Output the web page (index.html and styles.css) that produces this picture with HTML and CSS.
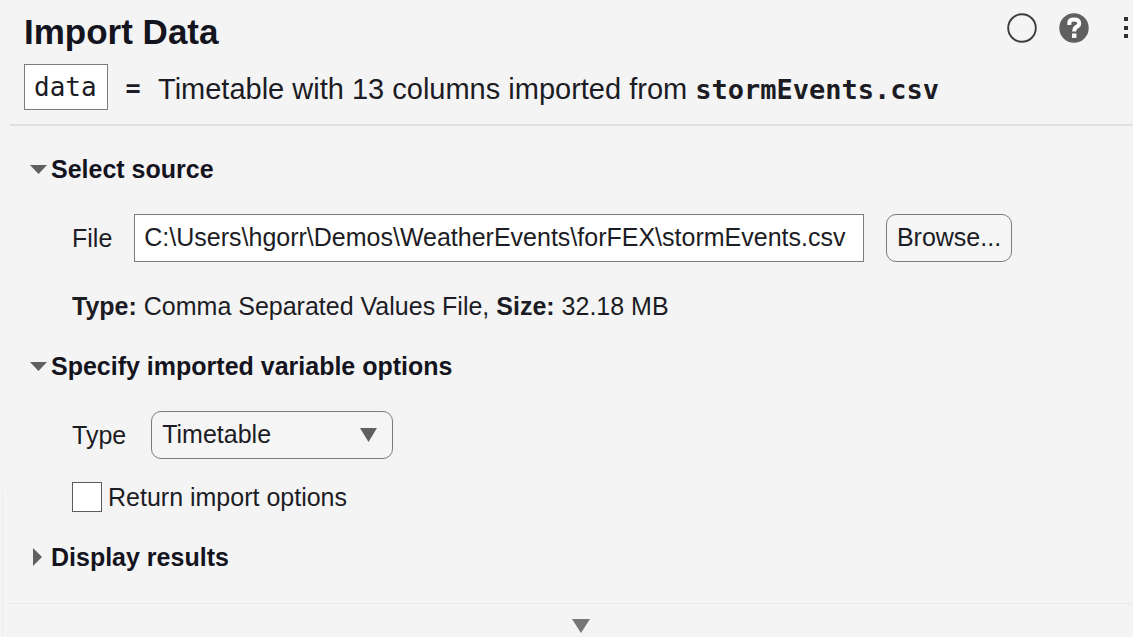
FILE: index.html
```html
<!DOCTYPE html>
<html lang="en">
<head>
<meta charset="utf-8">
<meta name="viewport" content="width=device-width, initial-scale=1">
<title>Import Data</title>
<link rel="stylesheet" href="styles.css">
</head>
<body>
<main class="task">
  <header class="task-header">
    <div class="title-row">
      <h1 class="title">Import Data</h1>
      <div class="actions">
        <button class="icon-button" type="button" aria-label="Run status">
          <svg width="32" height="32" viewBox="0 0 32 32"><circle cx="16" cy="16" r="13.8" fill="none" stroke="#3c3c3e" stroke-width="1.9"/></svg>
        </button>
        <button class="icon-button" type="button" aria-label="Help">
          <svg width="32" height="32" viewBox="0 0 32 32"><circle cx="16" cy="16" r="14.7" fill="#606060"/><path d="M11.300 13V11Q11.300 7.600 16.200 7.600T21.200 11.500Q21.200 13.700 18.600 14.900Q16.200 16.100 16.200 19.600" fill="none" stroke="#fff" stroke-width="4"/><rect x="14" y="21.500" width="4.400" height="4.400" fill="#fff"/></svg>
        </button>
        <button class="icon-button icon-button-narrow" type="button" aria-label="More options">
          <svg width="8" height="32" viewBox="0 0 8 32"><path d="M2 5h4v4H2zM2 14h4v4H2zM2 22h4v4H2z" fill="#303032"/></svg>
        </button>
      </div>
    </div>
    <div class="summary-row">
      <input class="variable" type="text" value="data" aria-label="Output variable" size="4">
      <span class="equals">=</span>
      <p class="description">Timetable with 13 columns imported from <code class="filename">stormEvents.csv</code></p>
    </div>
  </header>

  <div class="sections">
    <details class="section" open>
      <summary class="heading"><svg class="marker" width="18" height="18" viewBox="0 0 18 18"><path d="M0 5h17l-8.500 9z" fill="#606060"/></svg>Select source</summary>
      <div class="section-body">
        <div class="file-row">
          <label class="label" for="file">File</label>
          <input class="file-input" id="file" type="text" value="C:\Users\hgorr\Demos\WeatherEvents\forFEX\stormEvents.csv">
          <button class="browse" type="button">Browse...</button>
        </div>
        <p class="file-info"><b>Type:</b> Comma Separated Values File, <b>Size:</b> 32.18 MB</p>
      </div>
    </details>

    <details class="section" open>
      <summary class="heading"><svg class="marker" width="18" height="18" viewBox="0 0 18 18"><path d="M0 5h17l-8.500 9z" fill="#606060"/></svg>Specify imported variable options</summary>
      <div class="section-body">
        <div class="type-row">
          <label class="label" for="type">Type</label>
          <div class="select-wrap">
            <select class="select" id="type"><option>Timetable</option><option>Table</option></select>
            <svg class="select-arrow" width="18" height="14" viewBox="0 0 18 14"><path d="M1 0h17l-8.500 14z" fill="#606060"/></svg>
          </div>
        </div>
        <label class="check-row"><input class="checkbox" type="checkbox">Return import options</label>
      </div>
    </details>

    <details class="section">
      <summary class="heading"><svg class="marker" width="18" height="18" viewBox="0 0 18 18"><path d="M3 0v18l9-9z" fill="#606060"/></svg>Display results</summary>
    </details>
  </div>

  <footer class="task-footer">
    <button class="expand" type="button" aria-label="Show code">
      <svg width="18" height="14" viewBox="0 0 18 14"><path d="M0 0h18l-9 14z" fill="#767676"/></svg>
    </button>
  </footer>
</main>
</body>
</html>
```

FILE: styles.css
```css
* {
  box-sizing: border-box;
}

body {
  margin: 0;
  background: #f4f4f4;
  color: #1c1c24;
  font-family: "Liberation Sans", Arial, sans-serif;
  font-size: 25px;
  line-height: 32px;
}

h1,
p {
  margin: 0;
}

input,
button,
select {
  margin: 0;
  color: inherit;
  font: inherit;
}

.task {
  padding-left: 10px;
  background: linear-gradient(#ebebf2, #ebebf2) 2px 100% / 1px 23% no-repeat;
}

.task-header {
  padding: 8px 0 14px 14px;
  border-bottom: 2px solid #e0e0e0;
}

.title-row {
  display: flex;
  justify-content: space-between;
  align-items: flex-start;
}

.title {
  font-size: 35px;
  line-height: 48px;
  color: #14141e;
}

.actions {
  display: flex;
  gap: 20px;
  padding: 4px 3px 0 0;
}

.icon-button {
  width: 32px;
  height: 32px;
  padding: 0;
  border: 0;
  background: none;
}

.icon-button svg {
  display: block;
}

.icon-button-narrow {
  width: 8px;
  margin-left: 12px;
}

.summary-row {
  display: flex;
  align-items: center;
  margin-top: 8px;
}

.variable {
  width: 84px;
  height: 46px;
  padding: 0 9px;
  border: 1px solid #7c7c7c;
  border-radius: 0;
  background: #fff;
  font-family: "DejaVu Sans Mono", monospace;
  font-size: 26px;
}

.equals {
  width: 50px;
  padding-top: 4px;
  text-align: center;
  font-family: "DejaVu Sans Mono", monospace;
  font-weight: bold;
}

.description {
  padding-top: 4px;
  font-size: 29px;
}

.filename {
  font-family: "DejaVu Sans Mono", monospace;
  font-size: 27px;
  line-height: 1;
  font-weight: bold;
}

.sections {
  padding: 27px 0 30px 20px;
}

.heading {
  display: flex;
  align-items: center;
  gap: 3px;
  font-weight: bold;
  color: #14141e;
  list-style: none;
}

.heading::-webkit-details-marker {
  display: none;
}

.section-body {
  padding: 29px 121px 28px 42px;
}

.file-row,
.type-row {
  display: flex;
  align-items: center;
}

.file-input {
  flex: 1;
  min-width: 0;
  height: 48px;
  margin: 0 22px;
  padding: 0 9px 2px;
  border: 1px solid #7c7c7c;
  border-radius: 0;
  background: #fff;
}

.browse {
  width: 126px;
  height: 48px;
  padding: 0 0 2px;
  border: 1px solid #7c7c7c;
  border-radius: 10px;
  background: #f5f5f5;
}

.file-info {
  margin-top: 28px;
}

.select-wrap {
  position: relative;
  width: 242px;
  margin-left: 25px;
}

.select {
  display: block;
  width: 100%;
  height: 48px;
  padding: 0 10px 2px;
  border: 1px solid #7c7c7c;
  border-radius: 10px;
  background: #f5f5f5;
  appearance: none;
}

.select-arrow {
  position: absolute;
  top: 17px;
  right: 16px;
  pointer-events: none;
}

.check-row {
  display: flex;
  align-items: center;
  gap: 6px;
  margin-top: 22px;
}

.checkbox {
  width: 30px;
  height: 30px;
  border: 1px solid #5c5c5c;
  background: #fff;
  appearance: none;
}

.task-footer {
  display: flex;
  justify-content: center;
  padding: 15px 0 4px 19px;
  border-top: 1px solid #e8e8f2;
}

.expand {
  height: 14px;
  padding: 0;
  border: 0;
  background: none;
}

.expand svg {
  display: block;
}
```
